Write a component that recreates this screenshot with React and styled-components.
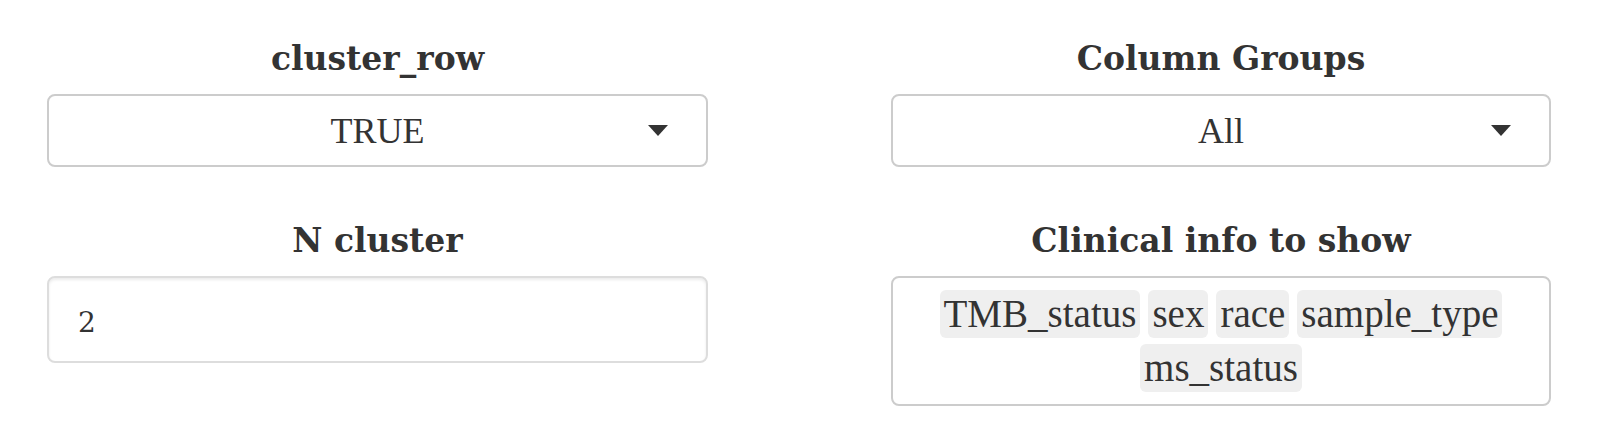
import styled, { createGlobalStyle } from "styled-components";

const GlobalStyle = createGlobalStyle`
  html, body {
    margin: 0;
    padding: 0;
    background: #ffffff;
  }
  body {
    color: #333333;
    font-family: "Liberation Serif", serif;
  }
`;

const Page = styled.div`
  display: grid;
  grid-template-columns: 661px 660px;
  column-gap: 183px;
  row-gap: 55px;
  padding: 40px 0 0 47px;
  align-items: start;
`;

const Field = styled.div`
  display: flex;
  flex-direction: column;
`;

const Label = styled.label`
  display: block;
  text-align: center;
  font-family: "DejaVu Serif", serif;
  font-weight: 700;
  font-size: 33px;
  line-height: 38px;
  margin-bottom: 16px;
  color: #333333;
`;

const SelectBox = styled.div`
  display: grid;
  grid-template-columns: 60px 1fr 60px;
  align-items: center;
  height: 73px;
  box-sizing: border-box;
  border: 2px solid #cccccc;
  border-radius: 8px;
  background: #ffffff;
`;

const SelectValue = styled.span`
  grid-column: 2;
  text-align: center;
  font-family: "Liberation Serif", serif;
  font-size: 36px;
  color: #333333;
`;

const Caret = styled.span`
  grid-column: 3;
  justify-self: end;
  margin-right: 38px;
  width: 0;
  height: 0;
  border-left: 10px solid transparent;
  border-right: 10px solid transparent;
  border-top: 11px solid #333333;
`;

const NumberInput = styled.div`
  display: flex;
  align-items: center;
  height: 87px;
  box-sizing: border-box;
  padding: 6px 29px 0;
  border: 2px solid #dddddd;
  border-radius: 8px;
  box-shadow: inset 0 2px 3px rgba(0, 0, 0, 0.08);
  font-family: "DejaVu Serif", serif;
  font-size: 28px;
  color: #333333;
`;

const MultiBox = styled.div`
  display: flex;
  flex-wrap: wrap;
  justify-content: center;
  align-content: flex-start;
  gap: 6px 8px;
  box-sizing: border-box;
  min-height: 130px;
  padding: 12px 20px 12px;
  border: 2px solid #cccccc;
  border-radius: 8px;
  background: #ffffff;
`;

const Chip = styled.span`
  display: inline-block;
  height: 48px;
  line-height: 48px;
  padding: 0 4px;
  border-radius: 6px;
  background: #efefef;
  font-family: "Liberation Serif", serif;
  font-size: 39px;
  color: #333333;
  white-space: nowrap;
`;

function Select({ label, value }) {
  return (
    <Field>
      <Label>{label}</Label>
      <SelectBox>
        <SelectValue>{value}</SelectValue>
        <Caret />
      </SelectBox>
    </Field>
  );
}

const clinical = ["TMB_status", "sex", "race", "sample_type", "ms_status"];

export default function App() {
  return (
    <>
      <GlobalStyle />
      <Page>
        <Select label="cluster_row" value="TRUE" />
        <Select label="Column Groups" value="All" />
        <Field>
          <Label>N cluster</Label>
          <NumberInput>2</NumberInput>
        </Field>
        <Field>
          <Label>Clinical info to show</Label>
          <MultiBox>
            {clinical.map((c) => (
              <Chip key={c}>{c}</Chip>
            ))}
          </MultiBox>
        </Field>
      </Page>
    </>
  );
}
